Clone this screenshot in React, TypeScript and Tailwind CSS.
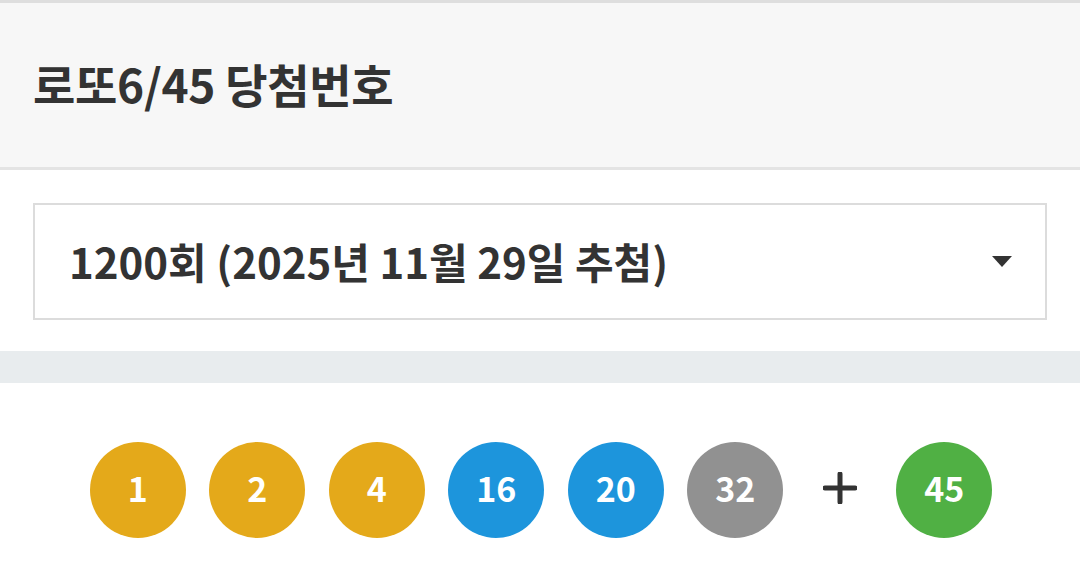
const balls: { n: number; color: string }[] = [
  { n: 1, color: 'bg-[#e4a91a]' },
  { n: 2, color: 'bg-[#e4a91a]' },
  { n: 4, color: 'bg-[#e4a91a]' },
  { n: 16, color: 'bg-[#1d95dc]' },
  { n: 20, color: 'bg-[#1d95dc]' },
  { n: 32, color: 'bg-[#919191]' },
];

function Ball({ n, color }: { n: number; color: string }) {
  return (
    <div
      className={`w-[96px] h-[96px] rounded-full ${color} flex items-center justify-center pb-[5px] text-white text-[34px] font-bold leading-none`}
    >
      {n}
    </div>
  );
}

export default function App() {
  return (
    <div
      className="w-[1080px] h-[587px] bg-white overflow-hidden"
      style={{ fontFamily: '"Noto Sans CJK KR", "Noto Sans", sans-serif' }}
    >
      <header className="h-[170px] bg-[#f7f7f7] border-t-[3px] border-b-[3px] border-t-[#dedede] border-b-[#e4e4e4] flex items-center px-[33px] pb-[4px]">
        <h1 className="text-[46px] font-bold text-[#333] tracking-[-0.3px] leading-none">
          로또6/45 당첨번호
        </h1>
      </header>

      <div className="px-[33px] pt-[33px] pb-[31px]">
        <div className="h-[117px] border-2 border-[#dcdcdc] flex items-center justify-between pl-[34px] pr-[32px]">
          <span className="text-[42px] font-bold text-[#333] leading-none pb-[2px]">
            1200회 (2025년 11월 29일 추첨)
          </span>
          <svg width="22" height="12" viewBox="0 0 22 12">
            <path d="M1 0 L21 0 L11 11 Z" fill="#333" />
          </svg>
        </div>
      </div>

      <div className="h-[32px] bg-[#e8ecee]" />

      <div className="flex items-center justify-center gap-[23.5px] pt-[59px] pl-[2px]">
        {balls.map((b) => (
          <Ball key={b.n} n={b.n} color={b.color} />
        ))}
        <div className="w-[66px] flex items-center justify-center pb-[4px]">
          <svg width="34" height="32" viewBox="0 0 34 32">
            <path d="M17 2 V30 M2 16 H32" stroke="#333" strokeWidth="5" strokeLinecap="round" />
          </svg>
        </div>
        <Ball n={45} color="bg-[#50b044]" />
      </div>
    </div>
  );
}
